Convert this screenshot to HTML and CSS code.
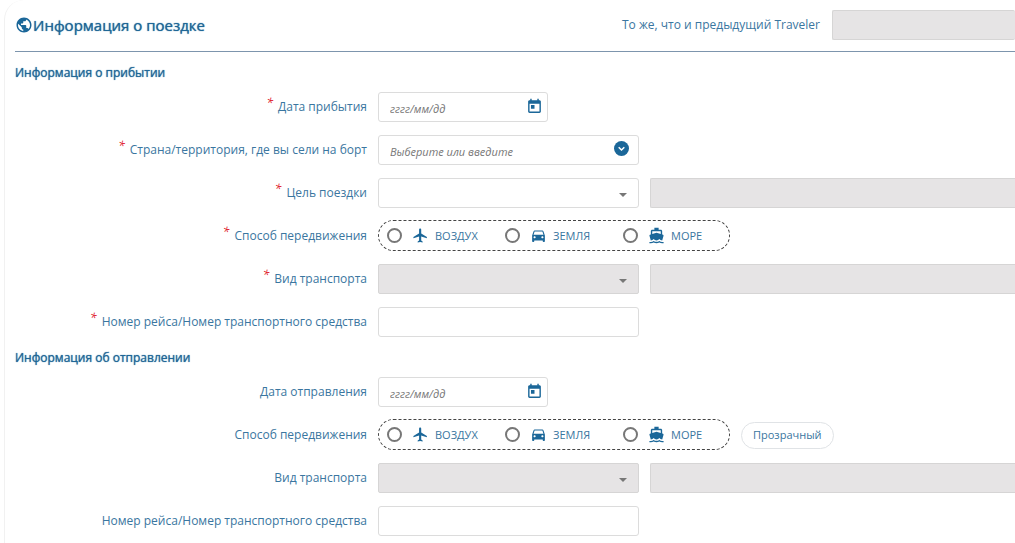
FILE: index.html
```html
<!DOCTYPE html>
<html lang="ru">
<head>
<meta charset="utf-8">
<meta name="viewport" content="width=device-width, initial-scale=1">
<title>Информация о поездке</title>
<link rel="stylesheet" href="styles.css">
</head>
<body>
<svg class="sprite" aria-hidden="true">
  <symbol id="globe" viewBox="0 0 24 24"><path d="M12 2C6.48 2 2 6.48 2 12s4.48 10 10 10 10-4.480 10-10S17.520 2 12 2zm-1 17.930c-3.950-.49-7-3.850-7-7.930 0-.62.080-1.210.210-1.790L9 15v1c0 1.100.9 2 2 2v1.930zm6.900-2.540c-.26-.81-1-1.390-1.900-1.390h-1v-3c0-.55-.45-1-1-1H8v-2h2c.55 0 1-.45 1-1V7h2c1.100 0 2-.9 2-2v-.41c2.930 1.190 5 4.060 5 7.410 0 2.080-.8 3.970-2.100 5.390z"/></symbol>
  <symbol id="calendar" viewBox="0 0 24 24"><path d="M19 3h-1V1h-2v2H8V1H6v2H5c-1.110 0-1.990.9-1.990 2L3 19c0 1.100.89 2 2 2h14c1.100 0 2-.9 2-2V5c0-1.100-.9-2-2-2zm0 16H5V8h14v11zM7 10h5v5H7z"/></symbol>
  <symbol id="chevron" viewBox="0 0 24 24"><circle cx="12" cy="12" r="12"/><path d="M7.500 10l4.500 4.500 4.500-4.500" fill="none" stroke="#fff" stroke-width="2.400"/></symbol>
  <symbol id="arrow" viewBox="0 0 8 4"><path d="M0 0h8L4 4z"/></symbol>
  <symbol id="plane" viewBox="0 0 24 24"><path d="M21 16v-2l-8-5V3.500c0-.83-.67-1.500-1.500-1.500S10 2.670 10 3.500V9l-8 5v2l8-2.500V19l-2 1.500V22l3.500-1 3.500 1v-1.500L13 19v-5.500l8 2.500z"/></symbol>
  <symbol id="car" viewBox="0 0 24 24"><path d="M18.920 6.010C18.720 5.420 18.160 5 17.500 5h-11c-.66 0-1.210.42-1.420 1.010L3 12v8c0 .55.45 1 1 1h1c.55 0 1-.45 1-1v-1h12v1c0 .55.45 1 1 1h1c.55 0 1-.45 1-1v-8l-2.080-5.990zM6.500 16c-.83 0-1.500-.67-1.500-1.500S5.670 13 6.500 13s1.500.67 1.500 1.500S7.330 16 6.500 16zm11 0c-.83 0-1.500-.67-1.500-1.500s.67-1.500 1.500-1.500 1.500.67 1.500 1.500-.67 1.500-1.500 1.500zM5 11l1.500-4.500h11L19 11H5z"/></symbol>
  <symbol id="boat" viewBox="0 0 24 24"><path d="M20 21c-1.390 0-2.780-.47-4-1.320-2.440 1.710-5.560 1.710-8 0C6.780 20.530 5.390 21 4 21H2v2h2c1.380 0 2.740-.35 4-.99 2.520 1.290 5.480 1.290 8 0 1.260.65 2.620.99 4 .99h2v-2h-2zM3.950 19H4c1.600 0 3.020-.88 4-2 .98 1.120 2.400 2 4 2s3.020-.88 4-2c.98 1.120 2.400 2 4 2h.05l1.890-6.680c.08-.26.06-.54-.06-.78s-.34-.42-.6-.5L20 10.620V6c0-1.100-.9-2-2-2h-3V1H9v3H6c-1.100 0-2 .9-2 2v4.620l-1.290.42c-.26.08-.48.26-.6.5s-.15.52-.06.78L3.950 19zM6 6h12v3.970L12 8 6 9.970V6z"/></symbol>
</svg>

<main class="panel">
  <form class="form">
    <header class="header">
      <h1 class="title"><svg class="title-icon" aria-hidden="true"><use href="#globe"/></svg>Информация о поездке</h1>
      <label class="label" for="previous">То же, что и предыдущий Traveler</label>
      <input class="field header-field" id="previous" type="text" disabled>
    </header>

    <section class="section">
      <h2 class="subtitle">Информация о прибытии</h2>

      <div class="row">
        <label class="label required" for="arrival-date">Дата прибытия</label>
        <div class="control date">
          <input class="field" id="arrival-date" type="text" placeholder="гггг/мм/дд">
          <button class="field-button" type="button" aria-label="Открыть календарь"><svg class="icon"><use href="#calendar"/></svg></button>
        </div>
      </div>

      <div class="row">
        <label class="label required" for="country">Страна/территория, где вы сели на борт</label>
        <div class="control">
          <input class="field" id="country" type="text" placeholder="Выберите или введите">
          <button class="field-button" type="button" aria-label="Показать список"><svg class="icon icon-round"><use href="#chevron"/></svg></button>
        </div>
      </div>

      <div class="row">
        <label class="label required" for="purpose">Цель поездки</label>
        <div class="control">
          <select class="field" id="purpose"><option></option></select>
          <svg class="arrow" aria-hidden="true"><use href="#arrow"/></svg>
        </div>
        <input class="field extra" type="text" aria-label="Другая цель поездки" disabled>
      </div>

      <div class="row">
        <span class="label required" id="arrival-mode">Способ передвижения</span>
        <div class="modes" role="radiogroup" aria-labelledby="arrival-mode">
          <label class="mode"><input class="radio" type="radio" name="arrival-mode"><svg class="mode-icon" aria-hidden="true"><use href="#plane"/></svg>ВОЗДУХ</label>
          <label class="mode"><input class="radio" type="radio" name="arrival-mode"><svg class="mode-icon" aria-hidden="true"><use href="#car"/></svg>ЗЕМЛЯ</label>
          <label class="mode"><input class="radio" type="radio" name="arrival-mode"><svg class="mode-icon" aria-hidden="true"><use href="#boat"/></svg>МОРЕ</label>
        </div>
      </div>

      <div class="row">
        <label class="label required" for="arrival-transport">Вид транспорта</label>
        <div class="control">
          <select class="field" id="arrival-transport" disabled><option></option></select>
          <svg class="arrow" aria-hidden="true"><use href="#arrow"/></svg>
        </div>
        <input class="field extra" type="text" aria-label="Другой вид транспорта" disabled>
      </div>

      <div class="row">
        <label class="label required" for="arrival-number">Номер рейса/Номер транспортного средства</label>
        <div class="control"><input class="field" id="arrival-number" type="text"></div>
      </div>
    </section>

    <section class="section">
      <h2 class="subtitle">Информация об отправлении</h2>

      <div class="row">
        <label class="label" for="departure-date">Дата отправления</label>
        <div class="control date">
          <input class="field" id="departure-date" type="text" placeholder="гггг/мм/дд">
          <button class="field-button" type="button" aria-label="Открыть календарь"><svg class="icon"><use href="#calendar"/></svg></button>
        </div>
      </div>

      <div class="row">
        <span class="label" id="departure-mode">Способ передвижения</span>
        <div class="modes" role="radiogroup" aria-labelledby="departure-mode">
          <label class="mode"><input class="radio" type="radio" name="departure-mode"><svg class="mode-icon" aria-hidden="true"><use href="#plane"/></svg>ВОЗДУХ</label>
          <label class="mode"><input class="radio" type="radio" name="departure-mode"><svg class="mode-icon" aria-hidden="true"><use href="#car"/></svg>ЗЕМЛЯ</label>
          <label class="mode"><input class="radio" type="radio" name="departure-mode"><svg class="mode-icon" aria-hidden="true"><use href="#boat"/></svg>МОРЕ</label>
        </div>
        <button class="clear" type="reset">Прозрачный</button>
      </div>

      <div class="row">
        <label class="label" for="departure-transport">Вид транспорта</label>
        <div class="control">
          <select class="field" id="departure-transport" disabled><option></option></select>
          <svg class="arrow" aria-hidden="true"><use href="#arrow"/></svg>
        </div>
        <input class="field extra" type="text" aria-label="Другой вид транспорта" disabled>
      </div>

      <div class="row">
        <label class="label" for="departure-number">Номер рейса/Номер транспортного средства</label>
        <div class="control"><input class="field" id="departure-number" type="text"></div>
      </div>
    </section>
  </form>
</main>
</body>
</html>
```
FILE: styles.css
```css
* {
  box-sizing: border-box;
}

body {
  margin: 0;
  background: #fff;
  color: #3a76a0;
  font: 12px/16px "Open Sans", "Noto Sans", sans-serif;
}

.sprite {
  display: none;
}

svg {
  display: block;
  fill: #1b6799;
}

.panel {
  min-height: 100vh;
  margin-left: 4px;
  padding-left: 10px;
  border-left: 1px solid #f1f1f1;
  border-top-left-radius: 20px;
}

.header {
  display: flex;
  align-items: center;
  gap: 12px;
  padding: 10px 0 11px;
  border-bottom: 1px solid #7d95ad;
}

.title {
  display: flex;
  flex: 1;
  align-items: center;
  margin: 0;
  color: #1f6797;
  font-size: 15px;
  font-weight: 400;
  line-height: 30px;
  text-shadow: 0 0 1px #1f6797;
}

.title-icon {
  width: 18px;
  height: 18px;
}

.header-field.field {
  width: 183px;
  border-right: 0;
  border-radius: 0;
}

.section {
  display: flex;
  flex-direction: column;
  gap: 13px;
  padding-top: 13px;
}

.subtitle {
  margin: 0 0 -2px;
  color: #1f6797;
  font-size: 12px;
  font-weight: 400;
  line-height: 16px;
  text-shadow: 0 0 1px #1f6797;
}

.row {
  display: grid;
  grid-template-columns: 352px auto 1fr;
  align-items: center;
  column-gap: 11px;
  height: 30px;
}

.row > .label {
  text-align: right;
}

.required::before {
  content: "*";
  margin-right: 5px;
  color: #e0202c;
  font-size: 12px;
  font-style: italic;
  line-height: 0;
  vertical-align: 4px;
}

.control {
  position: relative;
  width: 261px;
}

.date {
  width: 170px;
}

.field {
  display: block;
  width: 100%;
  height: 30px;
  margin: 0;
  padding: 3px 30px 0 11px;
  border: 1px solid #dcdcdc;
  border-radius: 3px;
  background: #fff;
  color: #555;
  font: inherit;
  appearance: none;
}

.field:disabled {
  border-color: #d6d5d5;
  border-radius: 2px;
  background: #e6e4e5;
  opacity: 1;
}

.field::placeholder {
  color: #767676;
  font-size: 11px;
  font-style: italic;
  opacity: 1;
}

.extra.field {
  border-right: 0;
  border-radius: 2px 0 0 2px;
}

.field-button {
  position: absolute;
  top: 6px;
  right: 5px;
  padding: 0;
  border: 0;
  background: none;
}

.icon {
  width: 17px;
  height: 17px;
}

.icon-round {
  width: 15px;
  height: 15px;
  margin-right: 5px;
}

.arrow {
  position: absolute;
  top: 15px;
  right: 12px;
  width: 8px;
  height: 4px;
  fill: #777;
  pointer-events: none;
}

.modes {
  display: flex;
  width: 352px;
  height: 31px;
  margin-top: -1px;
  padding-left: 8px;
  border: 1px dashed #444;
  border-radius: 16px;
}

.mode {
  display: flex;
  flex: 0 0 118px;
  align-items: center;
  font-size: 11px;
}

.radio {
  width: 15px;
  height: 15px;
  margin: 0 10px 0 0;
  border: 2px solid #777;
  border-radius: 50%;
  background: #fff;
  appearance: none;
}

.radio:checked {
  background: #1b6799;
}

.mode-icon {
  width: 17px;
  height: 17px;
  margin-right: 6px;
}

.clear {
  justify-self: start;
  height: 27px;
  padding: 0 11px;
  border: 1px solid #e0e3e6;
  border-radius: 14px;
  background: #fff;
  color: #3a76a0;
  font: inherit;
  font-size: 11px;
}
```
